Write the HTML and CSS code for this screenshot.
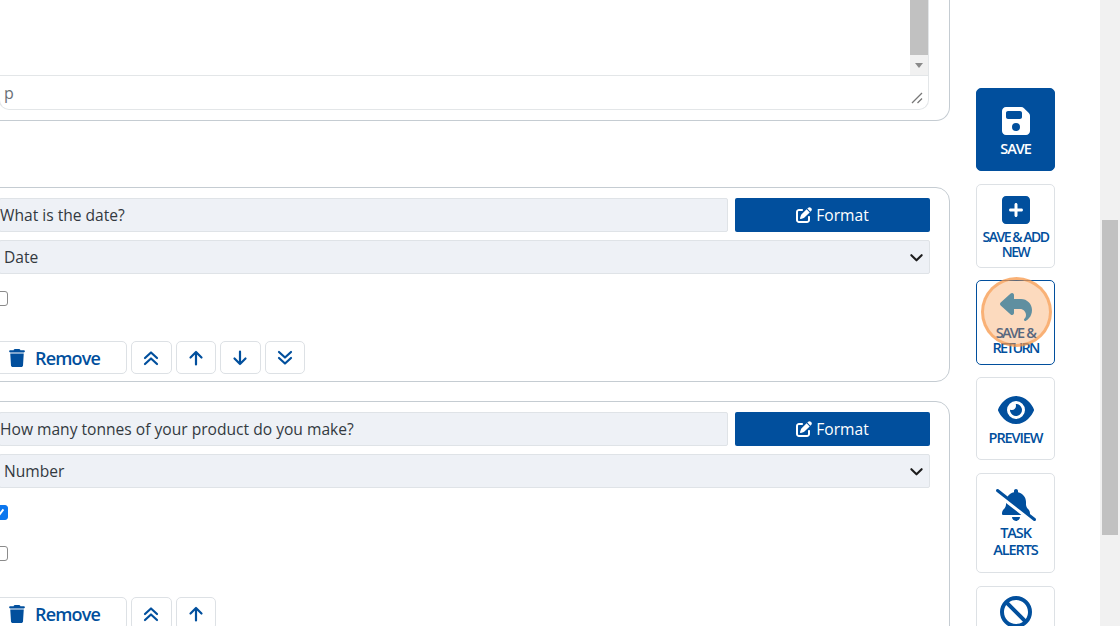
FILE: index.html
```html
<!DOCTYPE html>
<html lang="en">
<head>
<meta charset="utf-8">
<title>Form editor</title>
<link rel="stylesheet" href="styles.css">
</head>
<body>
<svg class="defs" width="0" height="0">
  <symbol id="i-trash" viewBox="0 0 448 512"><path d="M135.2 17.7L128 32H32C14.3 32 0 46.3 0 64S14.3 96 32 96H416c17.7 0 32-14.3 32-32s-14.3-32-32-32H320l-7.2-14.3C307.4 6.8 296.3 0 284.2 0H163.8c-12.1 0-23.2 6.8-28.6 17.7zM416 128H32L53.2 467c1.6 25.3 22.6 45 47.9 45H346.9c25.3 0 46.3-19.7 47.9-45L416 128z"/></symbol>
  <symbol id="i-edit" viewBox="0 0 512 512"><path d="M471.6 21.7c-21.9-21.9-57.3-21.9-79.2 0L362.3 51.7l97.9 97.9 30.1-30.1c21.9-21.9 21.9-57.3 0-79.2L471.6 21.7zm-299.2 220c-6.1 6.1-10.8 13.6-13.5 21.9l-29.6 88.8c-2.9 8.6-.6 18.1 5.8 24.6s15.9 8.7 24.6 5.8l88.8-29.6c8.2-2.7 15.7-7.4 21.9-13.5L437.7 172.3 339.7 74.3 172.4 241.7zM96 64C43 64 0 107 0 160V416c0 53 43 96 96 96H352c53 0 96-43 96-96V320c0-17.7-14.3-32-32-32s-32 14.3-32 32v96c0 17.7-14.3 32-32 32H96c-17.7 0-32-14.3-32-32V160c0-17.7 14.3-32 32-32h96c17.7 0 32-14.3 32-32s-14.3-32-32-32H96z"/></symbol>
  <symbol id="i-top" viewBox="0 0 16 16"><path d="M2 8 8 2.5 14 8M2 14 8 8.5 14 14" fill="none" stroke="currentColor" stroke-width="2.2" stroke-linecap="round" stroke-linejoin="round"/></symbol>
  <symbol id="i-bottom" viewBox="0 0 16 16"><path d="M2 2 8 7.5 14 2M2 8 8 13.5 14 8" fill="none" stroke="currentColor" stroke-width="2.2" stroke-linecap="round" stroke-linejoin="round"/></symbol>
  <symbol id="i-up" viewBox="0 0 16 16"><path d="M8 14.5V2M2.5 7.5 8 2 13.5 7.5" fill="none" stroke="currentColor" stroke-width="2.2" stroke-linecap="round" stroke-linejoin="round"/></symbol>
  <symbol id="i-down" viewBox="0 0 16 16"><path d="M8 1.5V14M2.5 8.5 8 14 13.5 8.5" fill="none" stroke="currentColor" stroke-width="2.2" stroke-linecap="round" stroke-linejoin="round"/></symbol>
  <symbol id="i-chev" viewBox="0 0 16 16"><path d="M2.5 5.5 8 11 13.5 5.5" fill="none" stroke="currentColor" stroke-width="2.2" stroke-linecap="round" stroke-linejoin="round"/></symbol>
</svg>
<div class="page">
  <div class="content">
    <main class="editor">
      <section class="card card-first">
        <div class="rte">
          <div class="rte-body">
            <div class="rte-scroll">
              <div class="rte-thumb"></div>
              <div class="rte-arrow"></div>
            </div>
          </div>
          <div class="rte-status">
            <span>p</span>
            <svg class="grip" viewBox="0 0 12 12"><path d="M1 11 11 1M6.5 11 11 6.5" fill="none" stroke="#777" stroke-width="1.3"/></svg>
          </div>
        </div>
      </section>

      <section class="card card-date">
        <div class="row">
          <div class="field grow">What is the date?</div>
          <button class="format"><svg class="ic-edit"><use href="#i-edit"/></svg>Format</button>
        </div>
        <div class="field select">Date<svg class="chev"><use href="#i-chev"/></svg></div>
        <div class="checks">
          <span class="check"></span>
        </div>
        <div class="actions">
          <button class="act remove"><svg class="ic-trash"><use href="#i-trash"/></svg>Remove</button>
          <button class="act sq"><svg class="ic-move"><use href="#i-top"/></svg></button>
          <button class="act sq"><svg class="ic-move"><use href="#i-up"/></svg></button>
          <button class="act sq"><svg class="ic-move"><use href="#i-down"/></svg></button>
          <button class="act sq"><svg class="ic-move"><use href="#i-bottom"/></svg></button>
        </div>
      </section>

      <section class="card card-last">
        <div class="row">
          <div class="field grow">How many tonnes of your product do you make?</div>
          <button class="format"><svg class="ic-edit"><use href="#i-edit"/></svg>Format</button>
        </div>
        <div class="field select">Number<svg class="chev"><use href="#i-chev"/></svg></div>
        <div class="checks two">
          <span class="check on"><svg viewBox="0 0 14 14"><path d="M3 7.5 6 10.5 11 4" fill="none" stroke="#fff" stroke-width="2.2"/></svg></span>
          <span class="check"></span>
        </div>
        <div class="actions">
          <button class="act remove"><svg class="ic-trash"><use href="#i-trash"/></svg>Remove</button>
          <button class="act sq"><svg class="ic-move"><use href="#i-top"/></svg></button>
          <button class="act sq"><svg class="ic-move"><use href="#i-up"/></svg></button>
        </div>
      </section>
    </main>

    <aside class="side">
      <button class="tool primary t-save">
        <svg class="ti" viewBox="0 0 448 512" width="28" height="32"><path d="M64 32C28.7 32 0 60.7 0 96V416c0 35.3 28.7 64 64 64H384c35.3 0 64-28.7 64-64V173.3c0-17-6.7-33.3-18.7-45.3L352 50.7C340 38.7 323.7 32 306.7 32H64zm0 96c0-17.7 14.3-32 32-32H288c17.7 0 32 14.3 32 32v64c0 17.7-14.3 32-32 32H96c-17.7 0-32-14.3-32-32V128zM224 288a64 64 0 1 1 0 128 64 64 0 1 1 0-128z"/></svg>
        <span>SAVE</span>
      </button>
      <button class="tool t-add">
        <svg class="ti" viewBox="0 0 448 512" width="28" height="32"><path d="M64 32C28.7 32 0 60.7 0 96V416c0 35.3 28.7 64 64 64H384c35.3 0 64-28.7 64-64V96c0-35.3-28.7-64-64-64H64zM200 344V280H136c-13.3 0-24-10.7-24-24s10.7-24 24-24h64V168c0-13.3 10.7-24 24-24s24 10.7 24 24v64h64c13.3 0 24 10.7 24 24s-10.7 24-24 24H248v64c0 13.3-10.7 24-24 24s-24-10.7-24-24z"/></svg>
        <span>SAVE &amp; ADD<br>NEW</span>
      </button>
      <button class="tool t-return">
        <svg class="ti" viewBox="0 0 512 512" width="32" height="32"><path d="M205 34.8c11.5 5.1 19 16.6 19 29.2v64H336c97.2 0 176 78.8 176 176c0 113.3-81.5 163.9-100.2 174.1c-2.5 1.4-5.3 1.9-8.1 1.9c-10.9 0-19.7-8.9-19.7-19.7c0-7.5 4.3-14.4 9.8-19.5c9.4-8.8 22.2-26.4 22.2-56.7c0-53-43-96-96-96H224v64c0 12.6-7.4 24.1-19 29.2s-25 3-34.4-5.4l-160-144C3.9 225.7 0 217.1 0 208s3.9-17.7 10.6-23.8l160-144c9.4-8.5 22.9-10.6 34.4-5.4z"/></svg>
        <span>SAVE &amp;<br>RETURN</span>
        <i class="spot"></i>
      </button>
      <button class="tool t-preview">
        <svg class="ti" viewBox="0 0 576 512" width="36" height="32"><path d="M288 32c-80.8 0-145.5 36.8-192.6 80.6C48.6 156 17.3 208 2.5 243.7c-3.3 7.9-3.3 16.7 0 24.6C17.3 304 48.6 356 95.4 399.4C142.5 443.2 207.2 480 288 480s145.5-36.8 192.6-80.6c46.8-43.5 78.1-95.4 93-131.1c3.3-7.9 3.3-16.7 0-24.6c-14.9-35.7-46.2-87.7-93-131.1C433.5 68.8 368.8 32 288 32zM144 256a144 144 0 1 1 288 0 144 144 0 1 1 -288 0zm144-64c0 35.3-28.7 64-64 64c-7.1 0-13.9-1.2-20.3-3.3c-5.5-1.8-11.9 1.6-11.7 7.4c.3 6.9 1.3 13.8 3.2 20.7c13.7 51.2 66.4 81.6 117.6 67.9s81.6-66.4 67.9-117.6c-11.1-41.5-47.8-69.4-88.6-71.1c-5.8-.2-9.2 6.1-7.4 11.7c2.1 6.4 3.3 13.2 3.3 20.3z"/></svg>
        <span>PREVIEW</span>
      </button>
      <button class="tool t-alerts">
        <svg class="ti" viewBox="0 0 640 512" width="40" height="32"><path d="M38.8 5.1C28.4-3.1 13.3-1.2 5.1 9.2S-1.2 34.7 9.2 42.9l592 464c10.4 8.2 25.5 6.3 33.7-4.1s6.3-25.5-4.1-33.7l-87.5-68.6c.5-1.7 .7-3.5 .7-5.4c0-27.6-11-54.1-30.5-73.7L512 320c-20.5-20.5-32-48.3-32-77.3V208c0-77.4-55-142-128-156.8V32c0-17.7-14.3-32-32-32s-32 14.3-32 32V51.2c-42.6 8.6-79 34.2-102 69.3L38.8 5.1zM160 242.7c0 29-11.5 56.8-32 77.3l-1.5 1.5C107 341 96 367.5 96 395.2c0 11.5 9.3 20.8 20.8 20.8H406.2L160 222.1v20.6zM384 448H320 256c0 17 6.7 33.3 18.7 45.3s28.3 18.7 45.3 18.7s33.3-6.7 45.3-18.7s18.7-28.3 18.7-45.3z"/></svg>
        <span>TASK<br>ALERTS</span>
      </button>
      <button class="tool t-ban">
        <svg class="ti" viewBox="0 0 512 512" width="32" height="32"><path d="M367.2 412.5L99.5 144.8C77.1 176.1 64 214.5 64 256c0 106 86 192 192 192c41.5 0 79.9-13.1 111.2-35.5zm45.3-45.3C434.9 335.9 448 297.5 448 256c0-106-86-192-192-192c-41.5 0-79.9 13.1-111.2 35.5L412.5 367.2zM0 256a256 256 0 1 1 512 0A256 256 0 1 1 0 256z"/></svg>
      </button>
    </aside>
  </div>
  <div class="scrollbar"><div class="thumb"></div></div>
</div>
</body>
</html>
```

FILE: styles.css
```css
* { box-sizing: border-box; }
html, body { margin: 0; height: 100%; overflow: hidden; background: #fff; }
body { font-family: "Open Sans", "Liberation Sans", sans-serif; font-size: 15.6px; color: #33393f; }
button { font-family: inherit; cursor: pointer; }
.defs { display: block; height: 0; }

.page { display: flex; height: 626px; overflow: hidden; }
.content { flex: 1; display: flex; min-width: 0; overflow: hidden; }

.editor { width: 990px; margin-left: -40px; margin-top: -100px; flex: none; display: flex; flex-direction: column; }

.card { border: 1px solid #c5ccd2; border-radius: 14px; padding: 10px 19px 0 38px; flex: none; background: #fff; }
.card-first { height: 221px; padding-top: 0; border-top: 0; border-radius: 0 0 14px 14px; margin-bottom: 66px; padding-bottom: 10px; display: flex; flex-direction: column; justify-content: flex-end; }
.card-date { height: 195px; margin-bottom: 19px; }
.card-last { height: 320px; }

.rte { height: 210px; margin-right: 1px; border: 1px solid #e3e6e8; border-top: 0; border-radius: 0 0 10px 10px; display: flex; flex-direction: column; background: #fff; }
.rte-body { flex: 1; display: flex; justify-content: flex-end; }
.rte-scroll { width: 18px; background: #f1f1f1; display: flex; flex-direction: column; }
.rte-thumb { flex: 1; background: #c1c1c1; }
.rte-arrow { height: 20px; display: flex; align-items: center; justify-content: center; }
.rte-arrow::before { content: ""; border: 4.5px solid transparent; border-top: 5px solid #8a8a8a; border-bottom: 0; }
.rte-status { height: 34px; border-top: 1px solid #e3e6e8; display: flex; align-items: center; justify-content: space-between; padding: 0 5px 0 4px; color: #6b7177; font-size: 16px; }
.grip { width: 12px; height: 12px; align-self: flex-end; margin-bottom: 5px; }

.row { display: flex; gap: 7px; margin-bottom: 8px; }
.field { height: 34px; background: #eef1f6; border: 1px solid #dfe3e7; border-radius: 2px; display: flex; align-items: center; line-height: 1; }
.grow { flex: 1; min-width: 0; padding-top: 2px; }
.select { justify-content: space-between; padding: 1px 5px 0 4px; }
.chev { width: 15px; height: 15px; color: #1c1c1c; }

.format { width: 195px; height: 34px; background: #014f9d; color: #fff; border: 0; border-radius: 2px; font-size: 15.6px; display: flex; align-items: center; justify-content: center; gap: 4px; padding: 0; }
.ic-edit { width: 16px; height: 16px; fill: #fff; }

.checks { height: 67px; padding-top: 17px; display: flex; flex-direction: column; gap: 26px; }
.checks.two { height: 109px; }
.check { width: 15px; height: 15px; margin-left: -6px; border: 1.5px solid #8b8b8b; border-radius: 3px; background: #fff; display: block; flex: none; }
.check.on { background: #0b76ee; border-color: #0b76ee; }
.check.on svg { display: block; width: 12px; height: 12px; }

.actions { display: flex; gap: 4px; }
.act { height: 33px; background: #fff; border: 1px solid #dde1e5; border-radius: 5px; color: #014f9d; display: flex; align-items: center; justify-content: center; padding: 0; flex: none; }
.remove { width: 136px; margin-left: -8px; justify-content: flex-start; gap: 10px; padding-left: 17px; font-size: 18px; font-weight: 600; letter-spacing: -0.85px; }
.sq { width: 40.5px; }
.ic-trash { width: 16px; height: 18px; fill: #014f9d; }
.ic-move { width: 16px; height: 16px; }

.side { flex: none; width: 150px; padding: 88px 0 0 26px; display: flex; flex-direction: column; gap: 13px; }
.tool { position: relative; width: 79px; background: #fff; border: 1px solid #dde1e5; border-radius: 5px; color: #014f9d; fill: #014f9d; padding: 0 2px; display: flex; flex-direction: column; align-items: center; font-size: 14.5px; font-weight: 600; line-height: 15px; letter-spacing: -1.1px; flex: none; }
.ti { flex: none; }
.tool span { display: block; text-align: center; white-space: nowrap; }
.primary { background: #014f9d; border-color: #014f9d; color: #fff; fill: #fff; }
.t-save { height: 83px; padding-top: 16px; }
.t-save span { margin-top: 4px; }
.t-add { height: 84px; padding-top: 9px; font-size: 14px; letter-spacing: -1.5px; }
.t-add span { margin-top: 3px; }
.t-return { height: 85px; padding-top: 10px; margin-top: -1px; border-color: #014f9d; letter-spacing: -1.8px; word-spacing: 1px; }
.t-return span { margin-top: 2px; }
.t-return .ti { fill: #0f8cd1; }
.t-preview { height: 83px; padding-top: 16px; margin-top: -1px; }
.t-preview span { margin-top: 4px; }
.t-alerts { height: 100px; padding-top: 15px; line-height: 17px; }
.t-alerts span { margin-top: 3px; }
.t-ban { height: 83px; padding-top: 9px; }
.spot { position: absolute; left: 4px; top: -4px; width: 71px; height: 70px; border-radius: 50%; background: rgba(247, 150, 70, 0.35); border: 3px solid rgba(247, 150, 70, 0.6); }

.scrollbar { width: 20px; flex: none; background: #f1f1f1; padding: 220px 2px 0; }
.thumb { height: 315px; background: #c1c1c1; }
```
